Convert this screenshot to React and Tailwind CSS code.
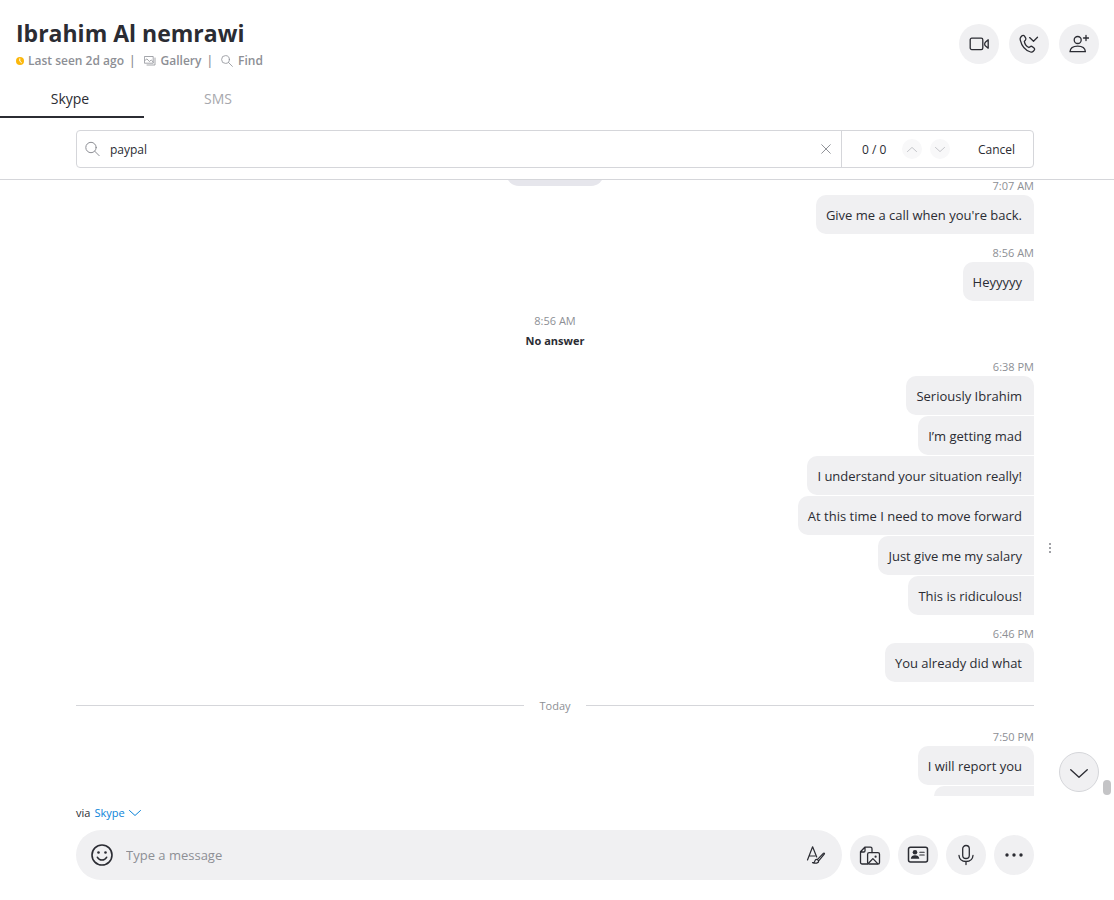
import { useState } from 'react';

const conversation = [
  { type: 'messages', time: '7:07 AM', messages: ["Give me a call when you're back."] },
  { type: 'messages', time: '8:56 AM', messages: ['Heyyyyy'] },
  { type: 'call', time: '8:56 AM', text: 'No answer' },
  {
    type: 'messages',
    time: '6:38 PM',
    messages: [
      'Seriously Ibrahim',
      'I’m getting mad',
      'I understand your situation really!',
      'At this time I need to move forward',
      'Just give me my salary',
      'This is ridiculous!',
    ],
    menuIndex: 4,
  },
  { type: 'messages', time: '6:46 PM', messages: ['You already did what'] },
  { type: 'divider', text: 'Today' },
  { type: 'messages', time: '7:50 PM', messages: ['I will report you'] },
  { type: 'placeholder' },
];

const Icon = ({ size = 20, stroke = 1.2, className = '', children }) => (
  <svg
    width={size}
    height={size}
    viewBox={`0 0 ${size} ${size}`}
    fill="none"
    stroke="currentColor"
    strokeWidth={stroke}
    strokeLinecap="round"
    strokeLinejoin="round"
    className={`shrink-0 ${className}`}
    aria-hidden="true"
  >
    {children}
  </svg>
);

const ClockIcon = () => (
  <Icon size={8} stroke={1} className="text-white">
    <circle cx="4" cy="4" r="4" fill="#fbb70b" stroke="none" />
    <path d="M3.8 1.8V4.2L5.4 5.6" />
  </Icon>
);

const GalleryIcon = () => (
  <Icon size={12} stroke={0.8}>
    <path d="M.8 1.5h8.4v6.7H.8zM11 3v7H3M.9 5.500l2-1.600 2.500 2.600L7.200 5l2 2" />
  </Icon>
);

const SearchIcon = ({ small }) =>
  small ? (
    <Icon size={12} stroke={0.8}>
      <circle cx="4.5" cy="4.5" r="3.9" />
      <path d="M7.4 7.4l4 4" />
    </Icon>
  ) : (
    <Icon size={16} stroke={1}>
      <circle cx="6" cy="6.5" r="5.2" />
      <path d="M9.8 10.3l4.4 4.4" />
    </Icon>
  );

const VideoIcon = () => (
  <Icon stroke={1.3}>
    <rect x="1.2" y="4.2" width="12.6" height="11.4" rx="1.6" />
    <path d="M19.2 5.8v8.4l-2.6-2.1a2.8 2.8 0 010-4.2z" />
  </Icon>
);

const PhoneIcon = () => (
  <Icon stroke={1.3}>
    <path d="M1.7 3.2L3 1.8c.7-.7 1.7-.7 2.3.1l1.3 2c.5.8.4 1.6-.2 2.3L5.3 7.4c.5 2.900 2.200 5 4.600 6.100l1.400-.9c.7-.5 1.500-.4 2.100.1l1.600 1.400c.8.7.8 1.600.1 2.300l-.8.9c-.7.8-1.700 1-2.700.7C6.600 16.400 2.600 11.700 1.200 5.800c-.2-1 0-1.900.5-2.600z" />
    <path d="M10.6 3.6l3.900 3.600 4-3.900" />
  </Icon>
);

const AddPersonIcon = () => (
  <Icon stroke={1.3}>
    <circle cx="8.7" cy="6" r="3.5" />
    <path d="M1 17.7c.3-3.600 3.400-5.600 7.700-5.600s7.400 2 7.700 5.600zM17 1.500v5M14.500 4h5" />
  </Icon>
);

const Chevron = ({ up, width = 12, className = '' }) => (
  <svg
    width={width}
    height={width / 2}
    viewBox="0 0 12 6"
    fill="none"
    stroke="currentColor"
    strokeWidth={width > 16 ? 0.9 : 1}
    strokeLinecap="round"
    strokeLinejoin="round"
    className={className}
    aria-hidden="true"
  >
    <path d={up ? 'M.5 5.500L6 .500l5.500 5' : 'M.5.500L6 5.500l5.500-5'} />
  </svg>
);

const SmileIcon = () => (
  <Icon size={24} stroke={1.6}>
    <circle cx="12" cy="12" r="10" />
    <path d="M7.4 14.3c1.200 2 2.800 2.700 4.600 2.700s3.400-.7 4.600-2.700" />
    <circle cx="8.5" cy="9.5" r="1.3" fill="currentColor" stroke="none" />
    <circle cx="15.5" cy="9.5" r="1.3" fill="currentColor" stroke="none" />
  </Icon>
);

const FormatIcon = () => (
  <Icon>
    <path d="M1.5 15L6.600 1.800 10.700 12M3.400 11H9" />
    <path d="M11.3 14.600l6-6.300c.7-.7 1.600.1 1 .9l-5.600 6.600zM11.300 14.400c-1.500-.2-2.300.8-2.500 1.800-.1.900-.9 1.400-2.300 1.500 2.800.9 6.400.7 6.200-2" />
  </Icon>
);

const FilesIcon = () => (
  <Icon size={22} stroke={1.3}>
    <path d="M8.6 20H3.200A1.700 1.700 0 011.500 18.300V7.800l4.300-4.600h5.600c.9 0 1.600.7 1.600 1.600v3.700M1.700 8h3.100c.7 0 1.200-.5 1.200-1.200V3.300" />
    <rect x="8.6" y="8.7" width="11.9" height="11.3" rx="1.6" />
    <path d="M9.5 19.200l4.400-4.600 4.800 5" />
    <circle cx="16.6" cy="12.7" r="1.1" fill="currentColor" stroke="none" />
  </Icon>
);

const ContactIcon = () => (
  <Icon size={22} stroke={1.5}>
    <rect x="1.5" y="3.3" width="19" height="14.6" rx="2" />
    <circle cx="8" cy="8.3" r="2.3" fill="currentColor" stroke="none" />
    <path d="M3.8 14.8c.2-2.400 1.900-3.500 4.200-3.500s4.100 1.100 4.300 3.500z" fill="currentColor" stroke="none" />
    <path d="M12.8 8.200h4.400M12.800 11h4.400" strokeWidth="1.1" />
  </Icon>
);

const MicIcon = () => (
  <Icon size={22} stroke={1.3}>
    <rect x="7.7" y="1.5" width="6.6" height="13" rx="3.3" />
    <path d="M4 11.5c.3 3.700 2.800 6 7 6s6.700-2.300 7-6M11 17.500v3" />
  </Icon>
);

const MoreIcon = () => (
  <Icon>
    <g fill="currentColor" stroke="none">
      <circle cx="3" cy="10" r="1.7" />
      <circle cx="10" cy="10" r="1.7" />
      <circle cx="17" cy="10" r="1.7" />
    </g>
  </Icon>
);

const RoundButton = ({ label, children }) => (
  <button
    type="button"
    aria-label={label}
    className="flex size-10 shrink-0 items-center justify-center rounded-full bg-[#f0f0f2]"
  >
    {children}
  </button>
);

const Header = () => (
  <header className="flex items-start justify-between pt-4 pr-[15px] pl-4">
    <div>
      <h1 className="mb-0.5 text-[23px] leading-[34px] font-bold">Ibrahim Al nemrawi</h1>
      <div className="flex items-center text-xs leading-[18px] font-semibold text-[#8d8f95]">
        <ClockIcon />
        <span className="ml-1">Last seen 2d ago</span>
        <span className="mr-2 ml-[5px]">|</span>
        <button type="button" className="flex items-center gap-[5px]">
          <GalleryIcon />
          Gallery
        </button>
        <span className="mr-2 ml-[5px]">|</span>
        <button type="button" className="flex items-center gap-[5px]">
          <SearchIcon small />
          Find
        </button>
      </div>
    </div>
    <div className="flex gap-2.5 pt-2">
      <RoundButton label="Video call">
        <VideoIcon />
      </RoundButton>
      <RoundButton label="Audio call">
        <PhoneIcon />
      </RoundButton>
      <RoundButton label="Add people">
        <AddPersonIcon />
      </RoundButton>
    </div>
  </header>
);

const Tabs = () => (
  <nav className="mt-2.5 flex gap-1 text-sm">
    <button type="button" className="h-[38px] w-36 border-b-2 border-[#2b2c33] pt-0.5 pr-1">
      Skype
    </button>
    <button type="button" className="h-[38px] w-36 border-b-2 border-transparent pt-0.5 pr-1 text-[#a7a8ad]">
      SMS
    </button>
  </nav>
);

const SearchBar = () => {
  const [query, setQuery] = useState('paypal');

  return (
    <div className="border-b border-[#d5d6da] pt-3 pr-20 pb-[11px] pl-[76px]">
      <div className="flex h-[38px] items-center rounded border border-[#d5d6da] text-xs">
        <label htmlFor="find" className="pl-2 text-[#8d8f95]" aria-label="Find in conversation">
          <SearchIcon />
        </label>
        <input
          id="find"
          value={query}
          onChange={(e) => setQuery(e.target.value)}
          className="ml-[9px] min-w-0 flex-1 pt-0.5 outline-none"
        />
        <button type="button" aria-label="Clear" className="mr-2.5 text-[#85878d]" onClick={() => setQuery('')}>
          <Icon size={10} stroke={0.9}>
            <path d="M.7.7l8.600 8.600M9.300.7L.7 9.300" />
          </Icon>
        </button>
        <div className="flex h-full w-48 items-center border-l border-[#d5d6da] pl-5">
          <span className="w-10 pt-0.5">0 / 0</span>
          <button
            type="button"
            aria-label="Previous result"
            className="flex size-5 items-center justify-center rounded-full bg-[#f8f8f9] text-[#b9babf]"
          >
            <Chevron up width={10} />
          </button>
          <button
            type="button"
            aria-label="Next result"
            className="ml-2 flex size-5 items-center justify-center rounded-full bg-[#f8f8f9] text-[#b9babf]"
          >
            <Chevron width={10} />
          </button>
          <button type="button" className="ml-7 pt-0.5">
            Cancel
          </button>
        </div>
      </div>
    </div>
  );
};

const MessageGroup = ({ item }) => (
  <div className="mt-[13px] flex flex-col items-end gap-px">
    <time className="mb-0.5 text-[11px] leading-3 text-[#8d8f95]">{item.time}</time>
    {item.messages.map((text, index) => (
      <div
        key={text}
        className={`relative rounded-l-[10px] bg-[#f0f0f2] pt-[11px] pr-3 pb-[9px] pl-2.5 text-[13px] leading-[19px] ${
          index === 0 ? 'rounded-tr-[10px]' : ''
        }`}
      >
        {text}
        {index === item.menuIndex && (
          <button
            type="button"
            aria-label="Message options"
            className="absolute top-1.5 -right-5 flex w-2 flex-col items-center gap-0.5 py-px text-[#a0a1a6]"
          >
            <span className="size-0.5 bg-current" />
            <span className="size-0.5 bg-current" />
            <span className="size-0.5 bg-current" />
          </button>
        )}
      </div>
    ))}
  </div>
);

const ConversationItem = ({ item }) => {
  if (item.type === 'call') {
    return (
      <div className="mt-[11px] -mb-[5px] flex flex-col items-center gap-0.5 pb-[3px] text-[11px] leading-[18px]">
        <time className="text-[#8d8f95]">{item.time}</time>
        <strong>{item.text}</strong>
      </div>
    );
  }

  if (item.type === 'divider') {
    return (
      <div className="mt-3.5 mb-4 flex items-center gap-[15px] text-[11px] leading-[19px] text-[#8d8f95]">
        <span className="h-px flex-1 bg-[#d5d6da]" />
        {item.text}
        <span className="h-px flex-1 bg-[#d5d6da]" />
      </div>
    );
  }

  // bubble whose content has not loaded yet
  if (item.type === 'placeholder') {
    return <div className="mt-px ml-auto h-[39px] w-[100px] rounded-l-[10px] bg-[#f0f0f2]" />;
  }

  return <MessageGroup item={item} />;
};

const Conversation = () => (
  <main className="relative min-h-0 flex-1 overflow-hidden pr-20 pl-[76px]">
    <div className="-mt-5">
      <div className="mx-auto -mb-[19px] h-[26px] w-[98px] rounded-full bg-[#e6e6ec]" />
      {conversation.map((item, index) => (
        <ConversationItem key={index} item={item} />
      ))}
    </div>
    <button
      type="button"
      aria-label="Scroll to latest"
      className="absolute right-[15px] bottom-1 flex size-10 items-center justify-center rounded-full border border-[#d5d6da] bg-[#f0f0f2] pt-0.5"
    >
      <Chevron width={18} />
    </button>
    <div className="absolute right-[3px] bottom-px h-[15px] w-2 rounded-full bg-[#c4c4c6]" />
  </main>
);

const Composer = () => (
  <footer className="pt-2 pr-20 pb-5 pl-[76px]">
    <div className="flex text-[11px] leading-[18px]">
      <span className="mr-1">via</span>
      <button type="button" className="flex items-center gap-1 text-[#0b83d9]">
        Skype
        <Chevron />
      </button>
    </div>
    <div className="mt-2 flex items-center gap-2">
      <div className="flex h-[50px] min-w-0 flex-1 items-center rounded-full bg-[#f0f0f2] pr-4 pl-3.5">
        <button type="button" aria-label="Emoji">
          <SmileIcon />
        </button>
        <input
          aria-label="Type a message"
          placeholder="Type a message"
          className="ml-3 min-w-0 flex-1 pt-0.5 text-[13px] outline-none placeholder:text-[#8d8f95]"
        />
        <button type="button" aria-label="Format text">
          <FormatIcon />
        </button>
      </div>
      <RoundButton label="Add files">
        <FilesIcon />
      </RoundButton>
      <RoundButton label="Share contact">
        <ContactIcon />
      </RoundButton>
      <RoundButton label="Record a voice message">
        <MicIcon />
      </RoundButton>
      <RoundButton label="More">
        <MoreIcon />
      </RoundButton>
    </div>
  </footer>
);

const App = () => (
  <div className="flex h-screen flex-col bg-white font-['Open_Sans','Noto_Sans',sans-serif] text-[#2b2c33]">
    <Header />
    <Tabs />
    <SearchBar />
    <Conversation />
    <Composer />
  </div>
);

export default App;
